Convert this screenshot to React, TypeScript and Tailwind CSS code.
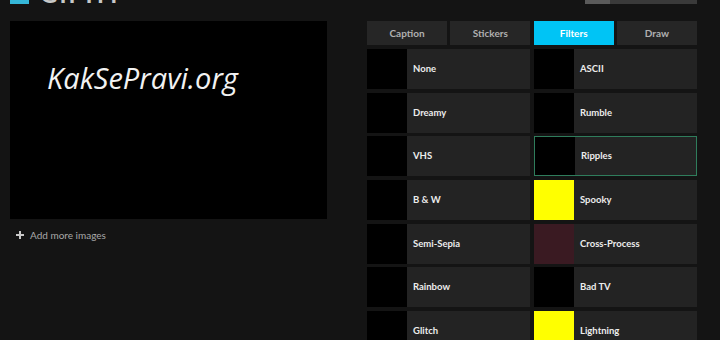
import React from "react";

const filters: { name: string; thumb: string; selected?: boolean }[] = [
  { name: "None", thumb: "#000000" },
  { name: "ASCII", thumb: "#000000" },
  { name: "Dreamy", thumb: "#000000" },
  { name: "Rumble", thumb: "#000000" },
  { name: "VHS", thumb: "#000000" },
  { name: "Ripples", thumb: "#000000", selected: true },
  { name: "B & W", thumb: "#000000" },
  { name: "Spooky", thumb: "#ffff00" },
  { name: "Semi-Sepia", thumb: "#000000" },
  { name: "Cross-Process", thumb: "#3a1a22" },
  { name: "Rainbow", thumb: "#000000" },
  { name: "Bad TV", thumb: "#000000" },
  { name: "Glitch", thumb: "#000000" },
  { name: "Lightning", thumb: "#ffff00" },
];

const tabs = ["Caption", "Stickers", "Filters", "Draw"];

export default function App() {
  return (
    <div
      className="w-[720px] h-[340px] overflow-hidden bg-[#141414]"
      style={{ fontFamily: "Lato, 'Noto Sans', sans-serif" }}
    >
      {/* header, mostly scrolled out of view */}
      <div className="h-[4px] overflow-hidden flex items-end pl-[10px] pr-[23px]">
        <div className="flex items-end gap-[11px]">
          <div className="w-[19px] h-[20px] bg-[#35b7d8]" />
          <div className="text-[24px] leading-[20px] font-bold text-[#c8c8c8] tracking-[2px]">
            GIPHY
          </div>
        </div>
        <div className="ml-auto flex h-[20px] w-[112px]">
          <div className="w-[25px] bg-[#5a5a5a]" />
          <div className="flex-1 bg-[#3a3a3a]" />
        </div>
      </div>

      <div className="flex mt-[17px] pl-[10px]">
        {/* left column */}
        <div className="w-[317px]">
          <div className="h-[198px] bg-black pt-[42px] pl-[37px]">
            <span
              className="text-[29px] italic text-[#f2f2f2] leading-none"
              style={{ fontFamily: "'Open Sans', 'Noto Sans', sans-serif" }}
            >
              KakSePravi.org
            </span>
          </div>
          <div className="flex items-center gap-[6px] mt-[11px] pl-[6px] text-[#a8a8a8]">
            <svg width="8" height="8" viewBox="0 0 8 8">
              <rect x="3" y="0" width="2" height="8" fill="#c8c8c8" />
              <rect x="0" y="3" width="8" height="2" fill="#c8c8c8" />
            </svg>
            <span className="text-[10px] leading-none">Add more images</span>
          </div>
        </div>

        {/* right column */}
        <div className="ml-[40px] w-[330px]">
          <div className="grid grid-cols-4 gap-[3.33px] h-[24px]">
            {tabs.map((t) => (
              <div
                key={t}
                className={
                  t === "Filters"
                    ? "flex items-center justify-center bg-[#00c4f5] text-white text-[10px] font-bold"
                    : "flex items-center justify-center bg-[#262626] text-[#b0b0b0] text-[10px] font-bold"
                }
              >
                {t}
              </div>
            ))}
          </div>
          <div className="grid grid-cols-2 gap-x-[4px] gap-y-[3.67px] mt-[4px]">
            {filters.map((f) => (
              <div
                key={f.name}
                className={
                  f.selected
                    ? "h-[40px] flex bg-[#232323] border border-[#2f7d5c]"
                    : "h-[40px] flex bg-[#232323]"
                }
              >
                <div className="w-[40px] h-full shrink-0" style={{ background: f.thumb }} />
                <div className="flex items-center pl-[6px] text-[9.5px] font-bold text-[#ececec]">
                  {f.name}
                </div>
              </div>
            ))}
          </div>
        </div>
      </div>
    </div>
  );
}
